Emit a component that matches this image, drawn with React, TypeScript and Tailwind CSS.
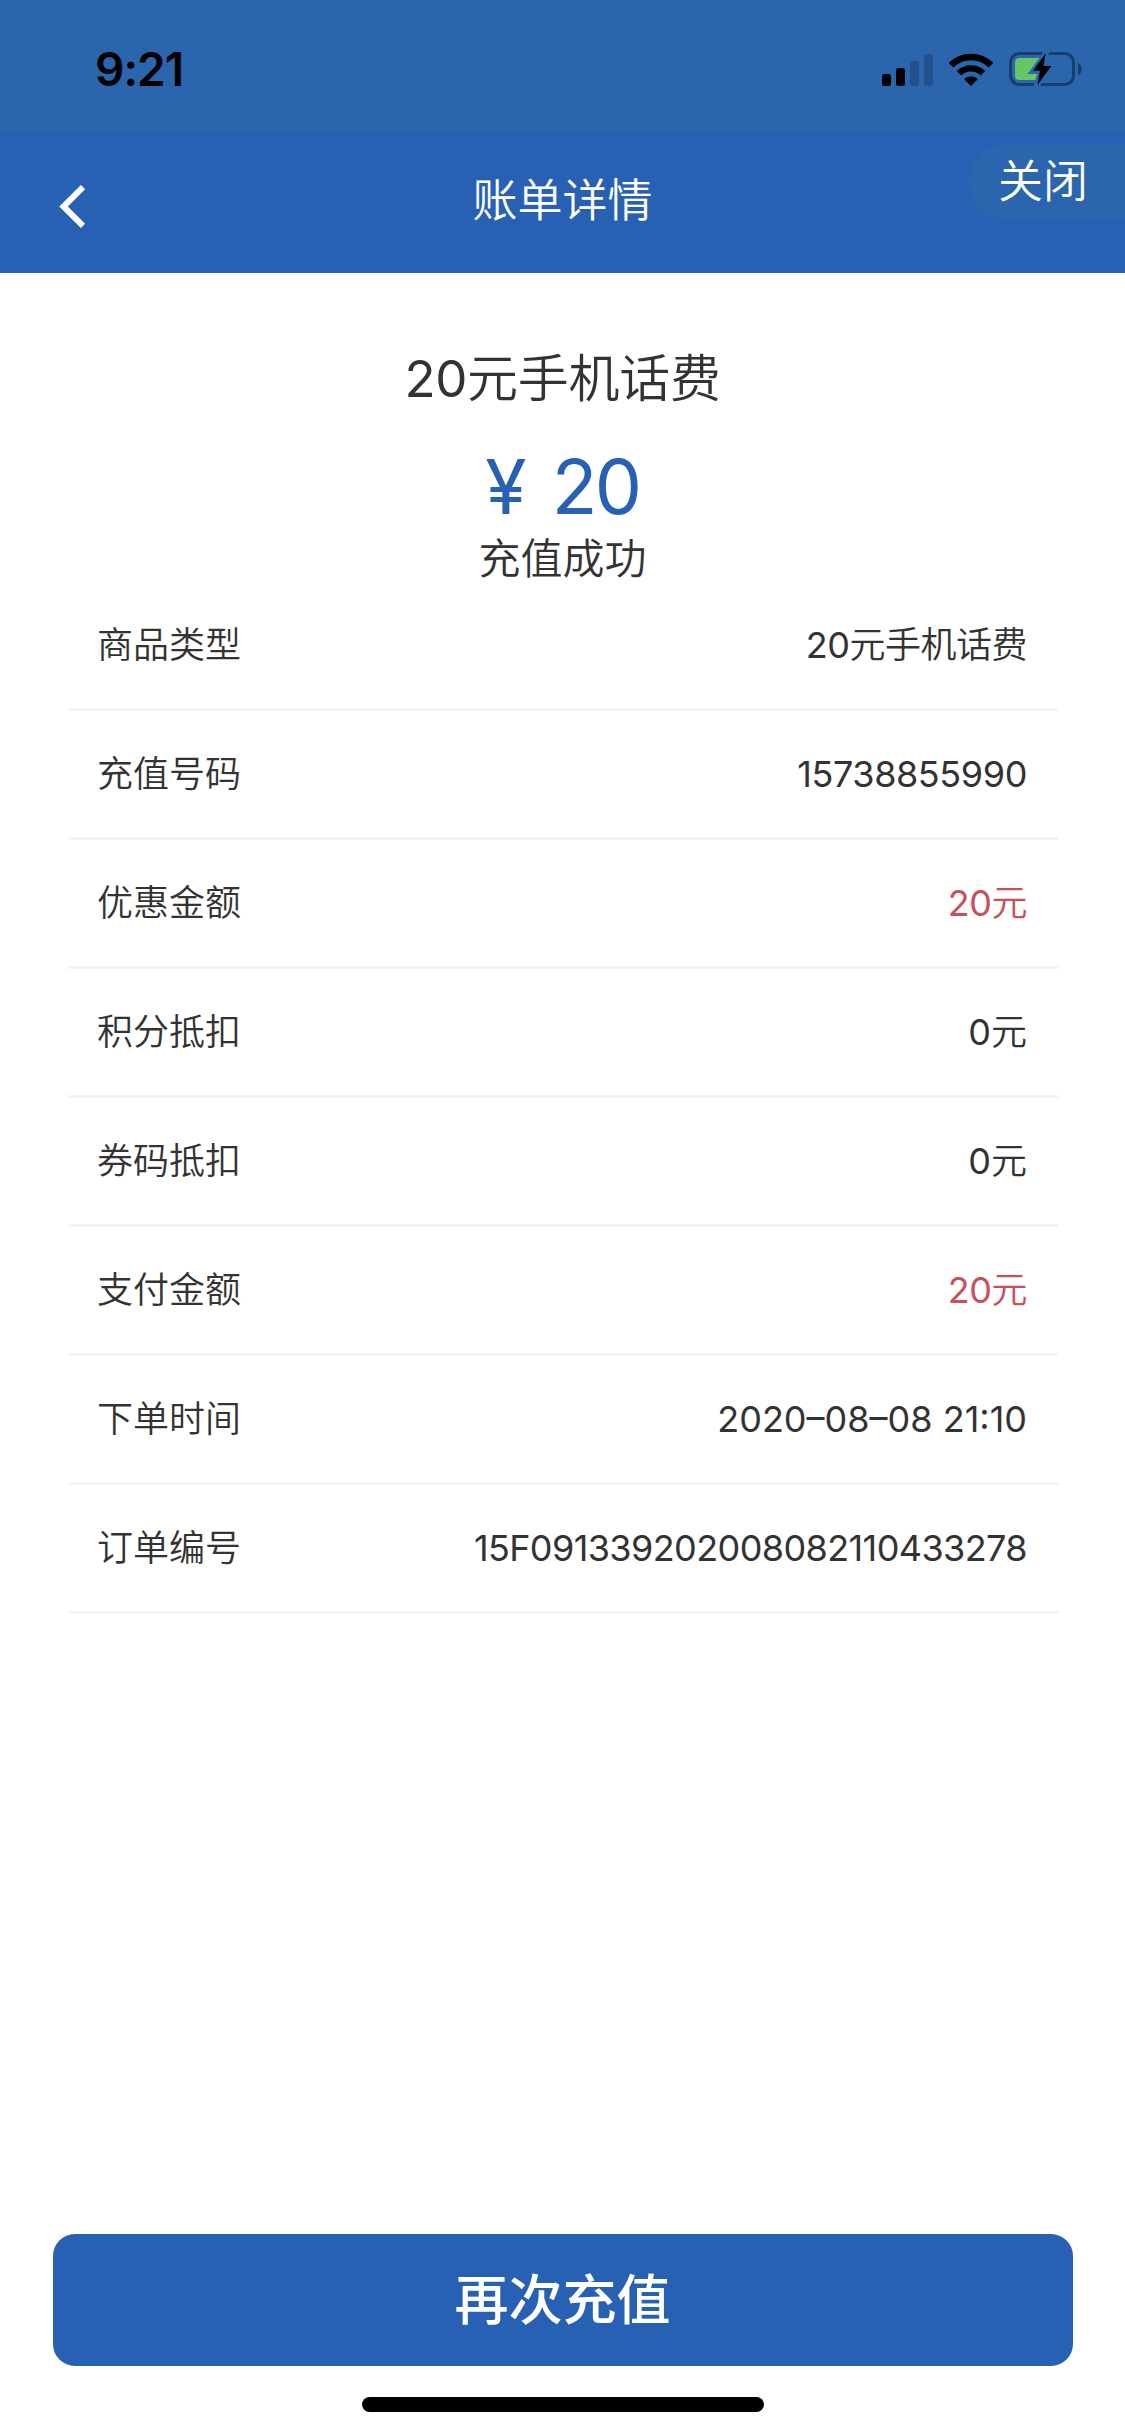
import React from "react";

type Row = { label: string; digits: string; unit?: string; style?: string };

const rows: Row[] = [
  { label: "商品类型", digits: "20", unit: "元手机话费", style: "tracking-[-0.5px]" },
  { label: "充值号码", digits: "15738855990", style: "tracking-[-0.4px]" },
  { label: "优惠金额", digits: "20", unit: "元", style: "text-[#c9505b] tracking-[-0.5px]" },
  { label: "积分抵扣", digits: "0", unit: "元" },
  { label: "券码抵扣", digits: "0", unit: "元" },
  { label: "支付金额", digits: "20", unit: "元", style: "text-[#c9505b] tracking-[-0.5px]" },
  { label: "下单时间", digits: "2020–08–08 21:10" },
  { label: "订单编号", digits: "15F091339202008082110433278", style: "tracking-[-0.6px]" },
];

function SignalIcon() {
  return (
    <svg width="51" height="32" viewBox="0 0 51 32">
      <rect x="0" y="20" width="9" height="12" rx="2.5" fill="#000" />
      <rect x="14" y="14" width="9" height="18" rx="2.5" fill="#000" />
      <rect x="28" y="7" width="9" height="25" rx="2.5" fill="#000" fillOpacity="0.2" />
      <rect x="42" y="0" width="9" height="32" rx="2.5" fill="#000" fillOpacity="0.2" />
    </svg>
  );
}

function WifiIcon() {
  return (
    <svg width="46" height="33" viewBox="0 0 46 33">
      <path d="M3 12.2 A28.5 28.5 0 0 1 43 12.2" fill="none" stroke="#000" strokeWidth="6.6" />
      <path d="M11 20.3 A17.2 17.2 0 0 1 35 20.3" fill="none" stroke="#000" strokeWidth="6.4" />
      <path d="M23 33 L16 26 A10 10 0 0 1 30 26 Z" fill="#000" />
    </svg>
  );
}

function BatteryIcon() {
  return (
    <svg width="74" height="34" viewBox="0 0 74 34">
      <rect x="1.5" y="1.5" width="63" height="31" rx="9" fill="none" stroke="#183f6b" strokeWidth="3" />
      <path d="M69 11 C74 13 74 21 69 23.5 Z" fill="#183f6b" />
      <path d="M10.5 6 H30.5 L18.5 22 H28 L26.5 28 H10.5 Q6 28 6 23.5 V10.5 Q6 6 10.5 6 Z" fill="#66c666" />
      <path d="M34 -1 H41 L38.5 4 H32 Z M25.5 30 H33 L31 35 H24.5 Z" fill="#2a65ad" />
      <path d="M36.7 1.3 L24 18.8 H31 L28.3 33.3 L42.3 14 H34.5 Z" fill="#000" />
    </svg>
  );
}

export default function App() {
  return (
    <div className="flex h-[2436px] w-[1125px] flex-col bg-white font-['Inter','Noto_Sans_CJK_SC',sans-serif] font-[350] text-[#333333]">
      <div className="flex h-[132px] items-start justify-between bg-[#2a65ad] pr-[42px] pl-[95px]">
        <div className="mt-[41px] text-[46px] leading-[56px] font-semibold tracking-[-1px] text-black">9:21</div>
        <div className="mt-[52px] flex items-end">
          <SignalIcon />
          <div className="ml-[15px]">
            <WifiIcon />
          </div>
          <div className="ml-[15px]">
            <BatteryIcon />
          </div>
        </div>
      </div>

      <header className="grid h-[141px] grid-cols-[1fr_auto_1fr] bg-[#2861b3] text-[45px] text-white">
        <button className="mt-[53px] ml-[59px] h-[43px] w-[27px]">
          <svg width="27" height="43" viewBox="0 0 27 43">
            <path d="M24 2.2 L4.5 21.5 L24 40.8" fill="none" stroke="#fff" strokeWidth="6" />
          </svg>
        </button>
        <h1 className="mt-[37px] h-[64px] leading-[64px] font-[350]">账单详情</h1>
        <button className="mt-[12px] flex h-[76px] w-[156px] items-center justify-self-end rounded-l-full bg-[#2a65ad] pl-[29px]">
          关闭
        </button>
      </header>

      <section className="flex h-[309px] flex-col items-center pt-[70px]">
        <h2 className="h-[72px] text-[51px] leading-[72px] font-[350] tracking-[-0.3px]">
          <span className="font-normal">20</span>元手机话费
        </h2>
        <div className="mt-[27px] h-[90px] text-[75px] leading-[90px] font-normal tracking-[-2.5px] text-[#2861b3] [word-spacing:9px]">
          ¥ 20
        </div>
        <div className="-mt-[3px] h-[60px] text-[42px] leading-[60px]">充值成功</div>
      </section>

      <dl className="mx-[68px] w-[990px] text-[36px]">
        {rows.map((row) => (
          <div
            key={row.label}
            className="flex h-[129px] items-center justify-between border-b-[3px] border-[#f4f4f4] pr-[31px] pl-[29px]"
          >
            <dt>{row.label}</dt>
            <dd className={row.style}>
              <span className="font-normal">{row.digits}</span>
              {row.unit}
            </dd>
          </div>
        ))}
      </dl>

      <div className="mt-auto flex flex-col items-center pb-[24px]">
        <button className="h-[132px] w-[1020px] rounded-[22px] bg-[#2861b3] text-[54px] font-medium text-white">
          再次充值
        </button>
        <div className="mt-[31px] h-[15px] w-[402px] rounded-full bg-black" />
      </div>
    </div>
  );
}
